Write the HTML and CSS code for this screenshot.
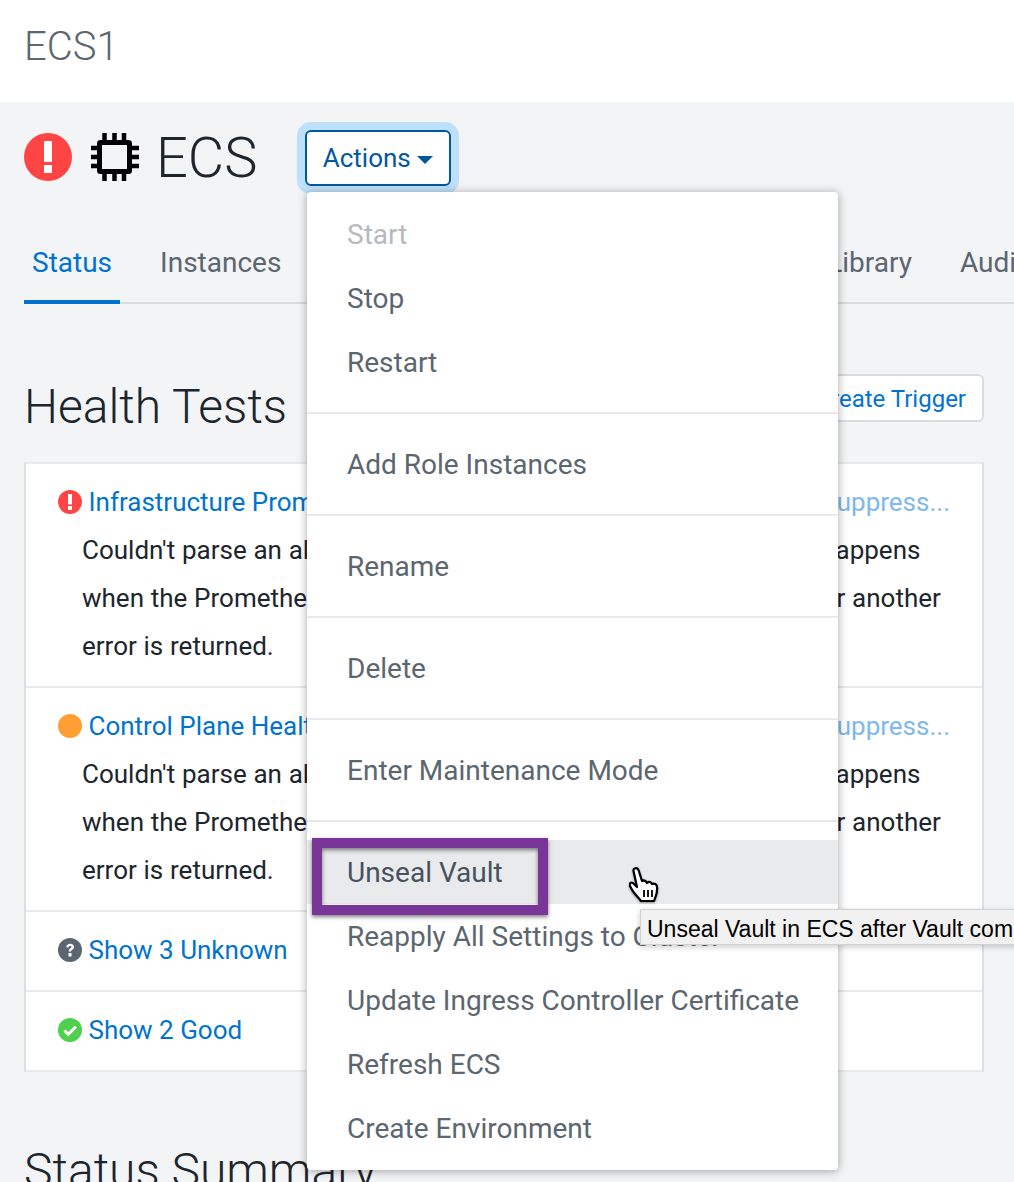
FILE: index.html
```html
<!DOCTYPE html>
<html>
<head>
    <title>ECS1 - ECS Status</title>
    <link rel="stylesheet" href="styles.css">
</head>
<body>
    <header class="top-bar">ECS1</header>

    <main class="page">
        <div class="service-row">
            <svg class="status-big" viewBox="0 0 48 48"><circle cx="24" cy="24" r="24" fill="#ff4444"/><rect x="20" y="8" width="8" height="21" rx="1" fill="#fff"/><rect x="20" y="32" width="8" height="8" fill="#fff"/></svg>
            <svg class="chip" viewBox="0 0 48 48">
                <rect x="8.500" y="9.500" width="30" height="29" rx="1" fill="none" stroke="#000" stroke-width="5"/>
                <path d="M13.500 0v10M23.500 0v10M33 0v10M13.500 38v10M23.500 38v10M33 38v10M0 15h9M0 24h9M0 33h9M38 15h10M38 24h10M38 33h10" stroke="#000" stroke-width="4.500"/>
            </svg>
            <h1 class="service-name">ECS</h1>
            <div class="actions">
                <button class="actions-btn" type="button">Actions <span class="caret"></span></button>
                <div class="menu">
                    <div class="menu-item disabled">Start</div>
                    <div class="menu-item">Stop</div>
                    <div class="menu-item">Restart</div>
                    <div class="menu-divider"></div>
                    <div class="menu-item">Add Role Instances</div>
                    <div class="menu-divider"></div>
                    <div class="menu-item">Rename</div>
                    <div class="menu-divider"></div>
                    <div class="menu-item">Delete</div>
                    <div class="menu-divider"></div>
                    <div class="menu-item">Enter Maintenance Mode</div>
                    <div class="menu-divider"></div>
                    <div class="menu-item hover">Unseal Vault</div>
                    <div class="menu-item">Reapply All Settings to Cluster</div>
                    <div class="menu-item">Update Ingress Controller Certificate</div>
                    <div class="menu-item">Refresh ECS</div>
                    <div class="menu-item">Create Environment</div>
                    <div class="highlight-box"></div>
                    <svg class="hand" viewBox="0 0 30 36">
                        <path d="M12 34C9 30 4 26 1 19c-1-4 2-4 4-2l3 3L4.500 4C4 1 8 0 9.500 3L13 14c2-1 4 0 5 2 2-2 4-1 5 1 2-1 5 0 5 3 1 6-2 11-3 14z" fill="#fff" stroke="#000" stroke-width="2.200" stroke-linejoin="round"/>
                        <path d="M15 23v7M19 23v7M23 23v7" stroke="#000" stroke-width="1.800"/>
                    </svg>
                    <div class="tooltip">Unseal Vault in ECS after Vault completes initialization</div>
                </div>
            </div>
        </div>

        <nav class="tabs">
            <a class="tab active">Status</a>
            <a class="tab">Instances</a>
            <a class="tab">Configuration</a>
            <a class="tab">Commands</a>
            <a class="tab">Charts Library</a>
            <a class="tab">Audits</a>
        </nav>

        <div class="section-head">
            <h2>Health Tests</h2>
            <button class="btn-light" type="button">Create Trigger</button>
        </div>

        <div class="health-table">
            <div class="health-row">
                <div class="health-title">
                    <span class="title-left">
                        <svg class="status-icon" viewBox="0 0 24 24"><circle cx="12" cy="12" r="12" fill="#ff4444"/><rect x="10" y="4" width="4" height="10.500" fill="#fff"/><rect x="10" y="16" width="4" height="4" fill="#fff"/></svg>
                        <a class="link">Infrastructure Prometheus Health</a>
                    </span>
                    <a class="suppress">Suppress...</a>
                </div>
                <div class="health-text">
                    <div class="line">Couldn't parse an alert response from Prometheus. This usually happens</div>
                    <div class="line">when the Prometheus server is not reachable, is not yet running or another</div>
                    <div class="line">error is returned.</div>
                </div>
            </div>
            <div class="health-row">
                <div class="health-title">
                    <span class="title-left">
                        <svg class="status-icon" viewBox="0 0 24 24"><circle cx="12" cy="12" r="12" fill="#ff9f33"/></svg>
                        <a class="link">Control Plane Health Test</a>
                    </span>
                    <a class="suppress">Suppress...</a>
                </div>
                <div class="health-text">
                    <div class="line">Couldn't parse an alert response from Prometheus. This usually happens</div>
                    <div class="line">when the Prometheus server is not reachable, is not yet running or another</div>
                    <div class="line">error is returned.</div>
                </div>
            </div>
            <div class="health-row">
                <div class="health-title">
                    <span class="title-left">
                        <svg class="status-icon" viewBox="0 0 24 24"><circle cx="12" cy="12" r="12" fill="#5b6670"/><path d="M8.200 9.200C8.500 7 10 5.800 12.200 5.800c2.300 0 3.900 1.300 3.900 3.200 0 2.500-3 2.600-3 4.400H10.700c0-3 2.800-3 2.800-4.300 0-.7-.6-1.200-1.400-1.200-.9 0-1.400.5-1.600 1.500z" fill="#fff"/><rect x="10.500" y="15" width="3" height="3.500" fill="#fff"/></svg>
                        <a class="link">Show 3 Unknown</a>
                    </span>
                </div>
            </div>
            <div class="health-row">
                <div class="health-title">
                    <span class="title-left">
                        <svg class="status-icon" viewBox="0 0 24 24"><circle cx="12" cy="12" r="12" fill="#4fd14f"/><path d="M6.500 12.500l3.800 3.800 7.500-7.500" fill="none" stroke="#fff" stroke-width="3"/></svg>
                        <a class="link">Show 2 Good</a>
                    </span>
                </div>
            </div>
        </div>

        <h2 class="summary-title">Status Summary</h2>
    </main>
</body>
</html>
```

FILE: styles.css
```css
html, body {
    height: 1182px;
    overflow: hidden;
}

body {
    margin: 0;
    font-family: 'Roboto', 'Liberation Sans', sans-serif;
    font-size: 26px;
    color: #1d252d;
    background-color: #f3f4f6;
}

/* top bar */
.top-bar {
    height: 102px;
    padding: 0 24px;
    box-sizing: border-box;
    line-height: 94px;
    background-color: #fff;
    color: #5b6670;
    font-size: 40px;
    font-weight: 300;
}

.page {
    padding: 0 30px 0 24px;
}

/* service title row */
.service-row {
    display: flex;
    align-items: center;
    height: 56px;
    margin-top: 28px;
}

.status-big {
    width: 48px;
    height: 48px;
    margin-top: -2px;
}

.chip {
    width: 48px;
    height: 48px;
    margin-left: 19px;
    margin-top: -2px;
}

.service-name {
    margin: 0 0 0 17px;
    width: 149px;
    font-size: 56px;
    font-weight: 300;
    line-height: 56px;
}

.actions {
    position: relative;
}

.actions-btn {
    display: block;
    width: 146px;
    height: 56px;
    padding: 0;
    background-color: #fff;
    border: 2px solid #00589e;
    border-radius: 6px;
    box-shadow: 0 0 0 8px #bfe0fb;
    color: #00589e;
    font-family: inherit;
    font-size: 26px;
}

.caret {
    display: inline-block;
    vertical-align: middle;
    border-top: 8px solid #00589e;
    border-left: 8px solid transparent;
    border-right: 8px solid transparent;
}

/* dropdown */
.menu {
    position: absolute;
    top: 62px;
    left: 2px;
    z-index: 10;
    width: 531px;
    height: 978px;
    padding: 10px 0;
    box-sizing: border-box;
    background-color: #fff;
    border-radius: 4px;
    box-shadow: 0 1px 10px rgba(0, 0, 0, 0.35);
    color: #5b6670;
    font-size: 28px;
}

.menu-item {
    height: 64px;
    padding: 0 40px;
    line-height: 66px;
    white-space: nowrap;
}

.menu-item.disabled {
    color: #b5babf;
}

.menu-item.hover {
    background-color: #e9eaec;
    color: #46525e;
}

.menu-divider {
    height: 2px;
    margin: 18px 0;
    background-color: #e8e9ea;
}

.highlight-box {
    position: absolute;
    top: 646px;
    left: 5px;
    width: 236px;
    height: 77px;
    box-sizing: border-box;
    border: 10px solid #7a3599;
    box-shadow: 0 2px 4px rgba(0, 0, 0, 0.5), inset 0 2px 4px rgba(0, 0, 0, 0.5);
}

.hand {
    position: absolute;
    top: 675px;
    left: 322px;
    width: 30px;
    height: 36px;
    filter: drop-shadow(0 1px 1px rgba(0, 0, 0, 0.4));
}

.tooltip {
    position: absolute;
    top: 717px;
    left: 333px;
    height: 34px;
    padding: 0 6px;
    line-height: 38px;
    background-color: #f1f1f1;
    border: 1px solid #d2d2d2;
    box-shadow: 0 2px 6px rgba(0, 0, 0, 0.2);
    color: #000;
    font-family: 'Liberation Sans', sans-serif;
    font-size: 23px;
    white-space: nowrap;
}

/* tabs */
.tabs {
    display: flex;
    gap: 32px;
    height: 92px;
    margin-top: 26px;
    box-sizing: border-box;
    border-bottom: 2px solid #d9dbdd;
    width: 990px;
    font-size: 28px;
}

.tab {
    padding: 0 8px;
    height: 92px;
    box-sizing: border-box;
    line-height: 102px;
    color: #5b6670;
    white-space: nowrap;
}

.tab.active {
    color: #0073d1;
    border-bottom: 4px solid #0073d1;
}

/* health tests */
.section-head {
    display: flex;
    justify-content: space-between;
    align-items: center;
    height: 48px;
    margin-top: 70px;
}

h2 {
    margin: 0;
    font-size: 48px;
    font-weight: 300;
    line-height: 60px;
}

.section-head h2 {
    margin-top: 18px;
}

.btn-light {
    height: 48px;
    padding: 2px 16px 0;
    background-color: #fff;
    border: 2px solid #d9dbdd;
    border-radius: 6px;
    color: #0073d1;
    font-family: inherit;
    font-size: 24px;
}

.health-table {
    margin-top: 40px;
    background-color: #fff;
    border: 2px solid #dcdee0;
    border-top-color: #e8e9ea;
    border-bottom-color: #e8e9ea;
}

.health-row {
    padding: 14px 32px 16px;
    border-bottom: 2px solid #e8e9ea;
}

.health-row:last-child {
    border-bottom: none;
}

.health-title {
    display: flex;
    justify-content: space-between;
    line-height: 48px;
}

.title-left {
    display: flex;
    align-items: center;
    gap: 6.5px;
}

.status-icon {
    width: 24px;
    height: 24px;
}

.link {
    color: #0073d1;
}

.suppress {
    color: #7fb8ea;
}

.health-text {
    padding-left: 24px;
    line-height: 48px;
}

.line {
    white-space: nowrap;
    word-spacing: 0.3px;
}

.summary-title {
    margin-top: 69px;
}
```
